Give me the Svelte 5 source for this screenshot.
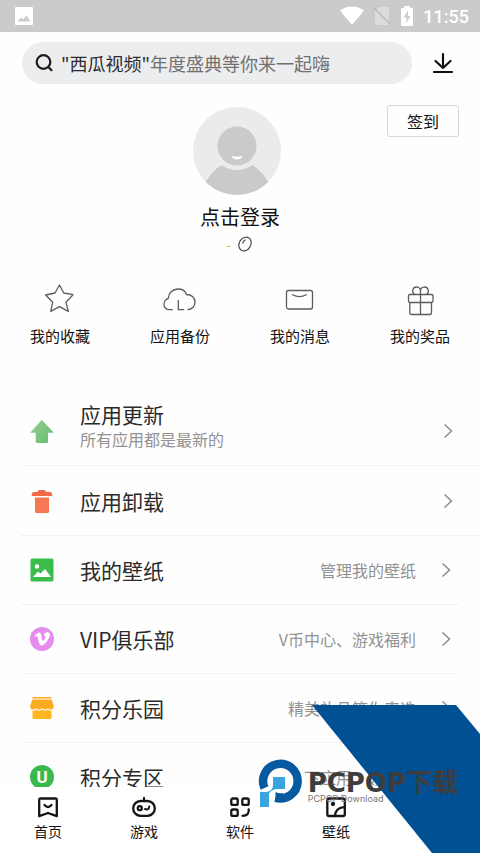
<script>
    let query = '';

    const shortcuts = [
        { icon: 'star', label: '我的收藏' },
        { icon: 'cloud', label: '应用备份' },
        { icon: 'message', label: '我的消息' },
        { icon: 'gift', label: '我的奖品' }
    ];

    const appRows = [
        { icon: 'update', title: '应用更新', note: '所有应用都是最新的' },
        { icon: 'trash', title: '应用卸载' }
    ];

    const serviceRows = [
        { icon: 'picture', title: '我的壁纸', value: '管理我的壁纸' },
        { icon: 'vip', title: 'VIP俱乐部', value: 'V币中心、游戏福利' },
        { icon: 'shop', title: '积分乐园', value: '精美礼品等你来选' },
        { icon: 'zone', title: '积分专区', value: '下应用、领积分' }
    ];

    const tabs = [
        { icon: 'home', label: '首页' },
        { icon: 'game', label: '游戏' },
        { icon: 'apps', label: '软件' },
        { icon: 'wallpaper', label: '壁纸' }
    ];
</script>

<div class="app">
    <div class="status">
        <svg class="status-picture" width="18" height="18" viewBox="0 0 18 18">
            <rect width="18" height="18" rx="1" fill="#fff" />
            <path d="M2.500 14.500l3.500-4 2 2 3.500-4 4 6z" fill="#ccc" />
        </svg>
        <svg width="24" height="20" viewBox="0 0 24 20">
            <path d="M0 4.500C7-1 17-1 24 4.500L12 19z" fill="#fff" />
        </svg>
        <svg width="18" height="20" viewBox="0 0 18 20">
            <path d="M6 1h9a1 1 0 0 1 1 1v16a1 1 0 0 1-1 1H3a1 1 0 0 1-1-1V5z" fill="#dcdcdc" />
            <path d="M1 2l16 16" stroke="#b8b8b8" stroke-width="1.500" />
        </svg>
        <svg width="14" height="20" viewBox="0 0 14 20">
            <path d="M4 0h6v2h2a1 1 0 0 1 1 1v16a1 1 0 0 1-1 1H2a1 1 0 0 1-1-1V3a1 1 0 0 1 1-1h2z" fill="#fff" />
            <path d="M8 4.500L3.500 11.500H6.500V17L10.500 10H8z" fill="#ccc" />
        </svg>
        <span class="time">11:55</span>
    </div>

    <header class="topbar">
        <label class="search">
            <svg width="20" height="20" viewBox="0 0 20 20" fill="none" stroke="#1c1c1e" stroke-width="2.200" stroke-linecap="round">
                <circle cx="8.500" cy="9" r="6.800" />
                <path d="M13.800 14.500l2.700 2.700" />
            </svg>
            <span class="field">
                {#if query === ''}
                    <span class="hint"><b>"西瓜视频"</b>年度盛典等你来一起嗨</span>
                {/if}
                <input type="text" bind:value={query} aria-label="搜索" />
            </span>
        </label>
        <button class="download" aria-label="下载">
            <svg width="22" height="22" viewBox="0 0 22 22" fill="none" stroke="#111" stroke-width="2.200" stroke-linecap="round" stroke-linejoin="round">
                <path d="M11 2v14M3.500 9l7.500 7 7.500-7M2 20h18" />
            </svg>
        </button>
    </header>

    <main>
        <section class="profile">
            <div class="account">
                <svg class="avatar" width="88" height="88" viewBox="0 0 88 88">
                    <circle cx="44" cy="44" r="44" fill="#ebebeb" />
                    <circle cx="44" cy="39" r="19.500" fill="#cacaca" />
                    <path d="M12.800 75Q18.500 64.500 28.500 58A26 26 0 0 0 59.500 58Q69.500 64.500 75.200 75A44 44 0 0 1 12.800 75z" fill="#cacaca" />
                    <path d="M38.500 49Q44 50.500 49.500 49Q48 52.500 44 52.500T38.500 49z" fill="#fff" />
                </svg>
                <button class="login">点击登录</button>
                <div class="beans">
                    <span>-</span>
                    <svg width="16" height="16" viewBox="0 0 16 16" fill="none" stroke="#4a4a4a">
                        <ellipse cx="8" cy="8" rx="5.800" ry="7.300" transform="rotate(30 8 8)" stroke-width="1.200" />
                        <path d="M5.800 7.200Q6.300 5 8.200 4" stroke-width="1.300" stroke-linecap="round" />
                    </svg>
                </div>
            </div>
            <button class="sign">签到</button>
        </section>

        <section class="shortcuts">
            {#each shortcuts as item}
                <button class="shortcut">
                    <svg width="32" height="32" viewBox="0 0 32 32" fill="none" stroke="#5c5c5c" stroke-width="1.300" stroke-linecap="round" stroke-linejoin="round">
                        {#if item.icon === 'star'}
                            <path d="M15.500 1L19.700 9L29 10.700L22 18.300L24.300 27.300L15.500 22.700L6.700 27.300L8.700 18.300L1.700 11L11 9Z" />
                        {:else if item.icon === 'cloud'}
                            <path d="M8.300 25.700H5.500C2 25.700 0 23.500 0 20.500C0 17.500 2 15 4.200 14.500C4.500 9 8.500 5 14 5C18.500 5 21.500 7.500 22.500 10.500C28 10.500 31 14 31 18C31 22 28 25.500 24 25.700" />
                            <path d="M14.300 16.500V25.700H19.700" />
                        {:else if item.icon === 'message'}
                            <rect x="2.500" y="6.500" width="26" height="18.500" rx="2" />
                            <path d="M8.500 10.700Q15.500 14.500 22.300 10.700" />
                        {:else}
                            <rect x="4.500" y="10.500" width="24.500" height="8" rx="1.500" />
                            <path d="M5.800 18.500V28.500Q5.800 30.500 7.800 30.500H25.500Q27.500 30.500 27.500 28.500V18.500M16.500 7V30.500" />
                            <path d="M11 10.500A3.900 3.900 0 1 1 16.500 7A3.900 3.900 0 1 1 22 10.500" />
                        {/if}
                    </svg>
                    {item.label}
                </button>
            {/each}
        </section>

        <ul class="rows wide">
            {#each appRows as row}
                <li>
                    <button class="row">
                        <svg class="row-icon" width="24" height="24" viewBox="0 0 24 24">
                            {#if row.icon === 'update'}
                                <defs>
                                    <linearGradient id="leaf" x1="0" y1="0" x2="1" y2="1">
                                        <stop offset="0" stop-color="#97d096" />
                                        <stop offset="1" stop-color="#66ba6d" />
                                    </linearGradient>
                                </defs>
                                <path d="M11.800 0.700L23.800 13.700H18V22.500Q18 24 16.500 24H7.200Q5.700 24 5.700 22.500V13.700H0.200z" fill="url(#leaf)" />
                            {:else}
                                <path d="M7.500 3Q8 1 9.500 1H14Q15.700 1 16.200 3H20.500Q22.300 3.500 22.300 7H1.700Q1.700 3.500 3.200 3z" fill="#f26a48" />
                                <path d="M5 8.500H19V22.500Q19 24 17.500 24H6.500Q5 24 5 22.500z" fill="#f77653" />
                            {/if}
                        </svg>
                        <span class="names">
                            <span class="title">{row.title}</span>
                            {#if row.note}
                                <span class="note">{row.note}</span>
                            {/if}
                        </span>
                        <svg class="chevron" width="10" height="16" viewBox="0 0 10 16">
                            <path d="M1.500 1.500L8.500 8L1.500 14.500" />
                        </svg>
                    </button>
                </li>
            {/each}
        </ul>

        <ul class="rows">
            {#each serviceRows as row}
                <li>
                    <button class="row">
                        <svg class="row-icon" width="24" height="24" viewBox="0 0 24 24">
                            {#if row.icon === 'picture'}
                                <rect x="0.500" y="0.500" width="23" height="23" rx="1.500" fill="#3bbd4d" />
                                <circle cx="7" cy="8.500" r="2.200" fill="#fff" />
                                <path d="M3 19L8 13.500L10.500 15.500L15 11L21 19z" fill="#fff" />
                            {:else if row.icon === 'vip'}
                                <circle cx="12" cy="12" r="12" fill="#e58ced" />
                                <path transform="translate(4.500 4.200) scale(.64)" fill="#fff" d="M23.977 6.416c-.105 2.338-1.739 5.543-4.894 9.609-3.268 4.247-6.026 6.370-8.290 6.370-1.409 0-2.578-1.294-3.553-3.881L5.322 11.400C4.603 8.816 3.834 7.522 3.010 7.522c-.179 0-.806.378-1.881 1.132L0 7.197c1.185-1.044 2.351-2.084 3.501-3.128C5.080 2.701 6.266 1.984 7.055 1.910c1.867-.180 3.016 1.100 3.447 3.838.465 2.953.789 4.789.971 5.507.539 2.450 1.131 3.674 1.776 3.674.502 0 1.256-.796 2.265-2.385 1.004-1.589 1.540-2.797 1.612-3.628.144-1.371-.395-2.061-1.614-2.061-.574 0-1.167.121-1.777.391 1.186-3.868 3.434-5.757 6.762-5.637 2.473.060 3.628 1.664 3.493 4.797z" />
                            {:else if row.icon === 'shop'}
                                <path d="M2.500 2Q2.500 1 3.500 1H20.500Q21.500 1 21.500 2V2.500H2.500z" fill="#f9a61c" />
                                <path d="M2.500 3.500H21.500L23.800 9.500V11Q23.500 13.500 21 13.500Q19 13.500 18 12Q16.800 13.500 15 13.500T12 12Q10.800 13.500 9 13.500T6 12Q5 13.500 3 13.500Q0.500 13.500 0.200 11V9.500z" fill="#fbac1e" />
                                <path d="M2.500 14.800Q4.500 15 6 13.500Q9 16 12 13.500Q15 16 18 13.500Q19.500 15 21.500 14.800V21.500Q21.500 23 20 23H4Q2.500 23 2.500 21.500z" fill="#ffb61f" />
                            {:else}
                                <circle cx="12" cy="12" r="12" fill="#39b94d" />
                                <text x="12" y="18" text-anchor="middle" fill="#fff">U</text>
                            {/if}
                        </svg>
                        <span class="names">
                            <span class="title">{row.title}</span>
                        </span>
                        <span class="value">{row.value}</span>
                        <svg class="chevron" width="10" height="16" viewBox="0 0 10 16">
                            <path d="M1.500 1.500L8.500 8L1.500 14.500" />
                        </svg>
                    </button>
                </li>
            {/each}
        </ul>
    </main>

    <nav class="tabs">
        {#each tabs as tab}
            <button class="tab">
                <svg width="24" height="24" viewBox="0 0 24 24" fill="none" stroke="#151515" stroke-width="2.300" stroke-linecap="round" stroke-linejoin="round">
                    {#if tab.icon === 'home'}
                        <path d="M4.500 2.500H19.500Q20.800 2.500 20.800 3.800V20.200L12 17L3.200 20.200V3.800Q3.200 2.500 4.500 2.500z" />
                        <path d="M8.500 9Q12 13 15.500 9" />
                    {:else if tab.icon === 'game'}
                        <rect x="1.200" y="5" width="21.600" height="14.800" rx="7.400" />
                        <path d="M12 1.800V5M13 13Q16.800 14.500 17.300 10.500" stroke-width="2" />
                        <circle cx="7.800" cy="12.200" r="2" />
                    {:else if tab.icon === 'apps'}
                        <rect x="3.300" y="2.500" width="6.400" height="6.400" rx="1.500" />
                        <rect x="14.300" y="2.500" width="6.400" height="6.400" rx="1.500" />
                        <rect x="3.300" y="13.500" width="6.400" height="6.400" rx="1.500" />
                        <path d="M20.700 13.500Q21.500 19.500 14.500 19.800" />
                    {:else}
                        <rect x="3.300" y="2.500" width="17.500" height="17.500" rx="1.800" />
                        <path d="M20.800 11.200Q11.500 11.500 11 20" />
                        <circle cx="9" cy="8" r="1" />
                    {/if}
                </svg>
                {tab.label}
            </button>
        {/each}
    </nav>

    <!-- site badge over the bottom right corner -->
    <div class="badge">
        <svg class="ribbon" width="168" height="148" viewBox="0 0 168 148">
            <path d="M0 0H144L168 29V148H120z" fill="#005093" />
        </svg>
        <div class="brand">
            <svg width="44" height="50" viewBox="0 0 44 50">
                <path d="M5.500 29A17.300 17.300 0 1 1 16.500 38.700" fill="none" stroke="#075a9f" stroke-width="8.500" />
                <path d="M16.500 33Q20 34.800 24 34V42Q20 43.500 16.500 43z" fill="#075a9f" />
                <path d="M14 18H26V30H18Q13 30 10 34.500V48H1V33H7Q14 32 14 26z" fill="#38a5e0" />
            </svg>
            <div class="brand-text">
                <strong>PCPOP下载</strong>
                <small>PCPOP Download</small>
            </div>
        </div>
    </div>
</div>

<style>
    :global(body) {
        background: #fefefe;
        font-family: "Noto Sans CJK SC", "Noto Sans", sans-serif;
        color: #2b2b2b;
    }

    .app {
        position: relative;
        display: flex;
        flex-direction: column;
        height: 100vh;
        overflow: hidden;
    }

    svg {
        display: block;
        flex: none;
        overflow: visible;
    }

    button {
        padding: 0;
        border: none;
        background: none;
        color: inherit;
        font-family: inherit;
        cursor: pointer;
    }

    /* Status bar */
    .status {
        display: flex;
        align-items: center;
        flex: none;
        gap: 9px;
        height: 32px;
        padding: 0 11px 0 15px;
        background: #cbcbcb;
    }

    .status-picture {
        margin-right: auto;
    }

    .time {
        color: #fff;
        font: 500 18px "Roboto", sans-serif;
    }

    /* Search bar */
    .topbar {
        display: flex;
        align-items: center;
        flex: none;
        gap: 20px;
        padding: 10px 26px 0 22px;
    }

    .search {
        display: flex;
        align-items: center;
        flex: 1;
        gap: 6px;
        height: 42px;
        padding: 0 20px 0 13px;
        border-radius: 21px;
        background: #ecedef;
    }

    .field {
        display: grid;
        flex: 1;
        align-items: center;
        font-size: 18px;
        line-height: 28px;
    }

    .hint,
    .field input {
        grid-area: 1 / 1;
        min-width: 0;
    }

    .hint {
        color: #707070;
        white-space: nowrap;
    }

    .hint b {
        color: #2b2b2b;
        font-weight: 400;
    }

    .field input {
        width: 100%;
        padding: 0;
        border: none;
        outline: none;
        background: transparent;
        font: inherit;
    }

    main {
        flex: 1;
        min-height: 0;
        overflow: hidden;
    }

    /* Profile */
    .profile {
        display: grid;
        grid-template-columns: 1fr auto 1fr;
        align-items: start;
        padding: 21px 21px 0;
    }

    .account {
        display: flex;
        flex-direction: column;
        align-items: center;
        grid-column: 2;
        padding-top: 2px;
    }

    .avatar {
        margin-right: 6px;
    }

    .login {
        margin-top: 8px;
        color: #111;
        font-size: 20px;
        line-height: 28px;
    }

    .beans {
        display: flex;
        align-items: center;
        gap: 6px;
        height: 16px;
        margin-top: 5px;
        color: #f0bf2f;
        font-size: 14px;
        line-height: 16px;
    }

    .sign {
        justify-self: end;
        width: 72px;
        height: 32px;
        border: 1px solid #d6d6d6;
        border-radius: 3px;
        color: #111;
        font-size: 16px;
    }

    /* Shortcuts */
    .shortcuts {
        display: grid;
        grid-template-columns: repeat(4, 1fr);
        padding: 32px 0 50px;
    }

    .shortcut {
        display: flex;
        flex-direction: column;
        align-items: center;
        gap: 10px;
        color: #111;
        font-size: 15px;
        line-height: 20px;
    }

    /* List */
    .rows {
        margin: 0 21px;
        padding: 0;
        list-style: none;
    }

    .rows.wide {
        margin-right: 0;
    }

    .row {
        display: flex;
        align-items: center;
        width: 100%;
        height: 69px;
        padding: 0 8px 0 9px;
        box-sizing: border-box;
        border-bottom: 1px solid #f1f1f1;
        text-align: left;
    }

    .wide .row {
        height: 70px;
        padding-right: 27px;
    }

    .row-icon text {
        font: 700 17px "Roboto", sans-serif;
    }

    .names {
        display: flex;
        flex-direction: column;
        flex: 1;
        margin-left: 26px;
    }

    .title {
        font-size: 21px;
        line-height: 28px;
    }

    .note,
    .value {
        color: #929292;
        font-size: 16px;
        line-height: 22px;
    }

    .note {
        margin-bottom: 12px;
    }

    .chevron {
        margin-left: 25px;
        fill: none;
        stroke: #8c8c8c;
        stroke-width: 1.5;
    }

    /* Bottom tabs, the last column stays free for the badge */
    .tabs {
        display: grid;
        grid-template-columns: repeat(5, 1fr);
        flex: none;
        padding: 9px 0 13px;
        background: #fff;
    }

    .tab {
        display: flex;
        flex-direction: column;
        align-items: center;
        gap: 2px;
        color: #111;
        font-size: 14px;
        line-height: 18px;
    }

    /* Badge */
    .badge {
        position: absolute;
        right: 0;
        bottom: 0;
        pointer-events: none;
    }

    .brand {
        position: absolute;
        right: 22px;
        bottom: 44px;
        display: flex;
        gap: 5px;
        color: #3d3d3d;
        white-space: nowrap;
    }

    .brand-text {
        display: flex;
        flex-direction: column;
        padding-top: 12px;
    }

    .brand strong {
        font-family: "DejaVu Sans", "Noto Sans CJK SC", sans-serif;
        font-size: 26px;
        font-weight: 700;
        line-height: 24px;
    }

    .brand small {
        color: #777;
        font-family: "Inter", sans-serif;
        font-size: 9px;
        line-height: 8px;
    }
</style>
